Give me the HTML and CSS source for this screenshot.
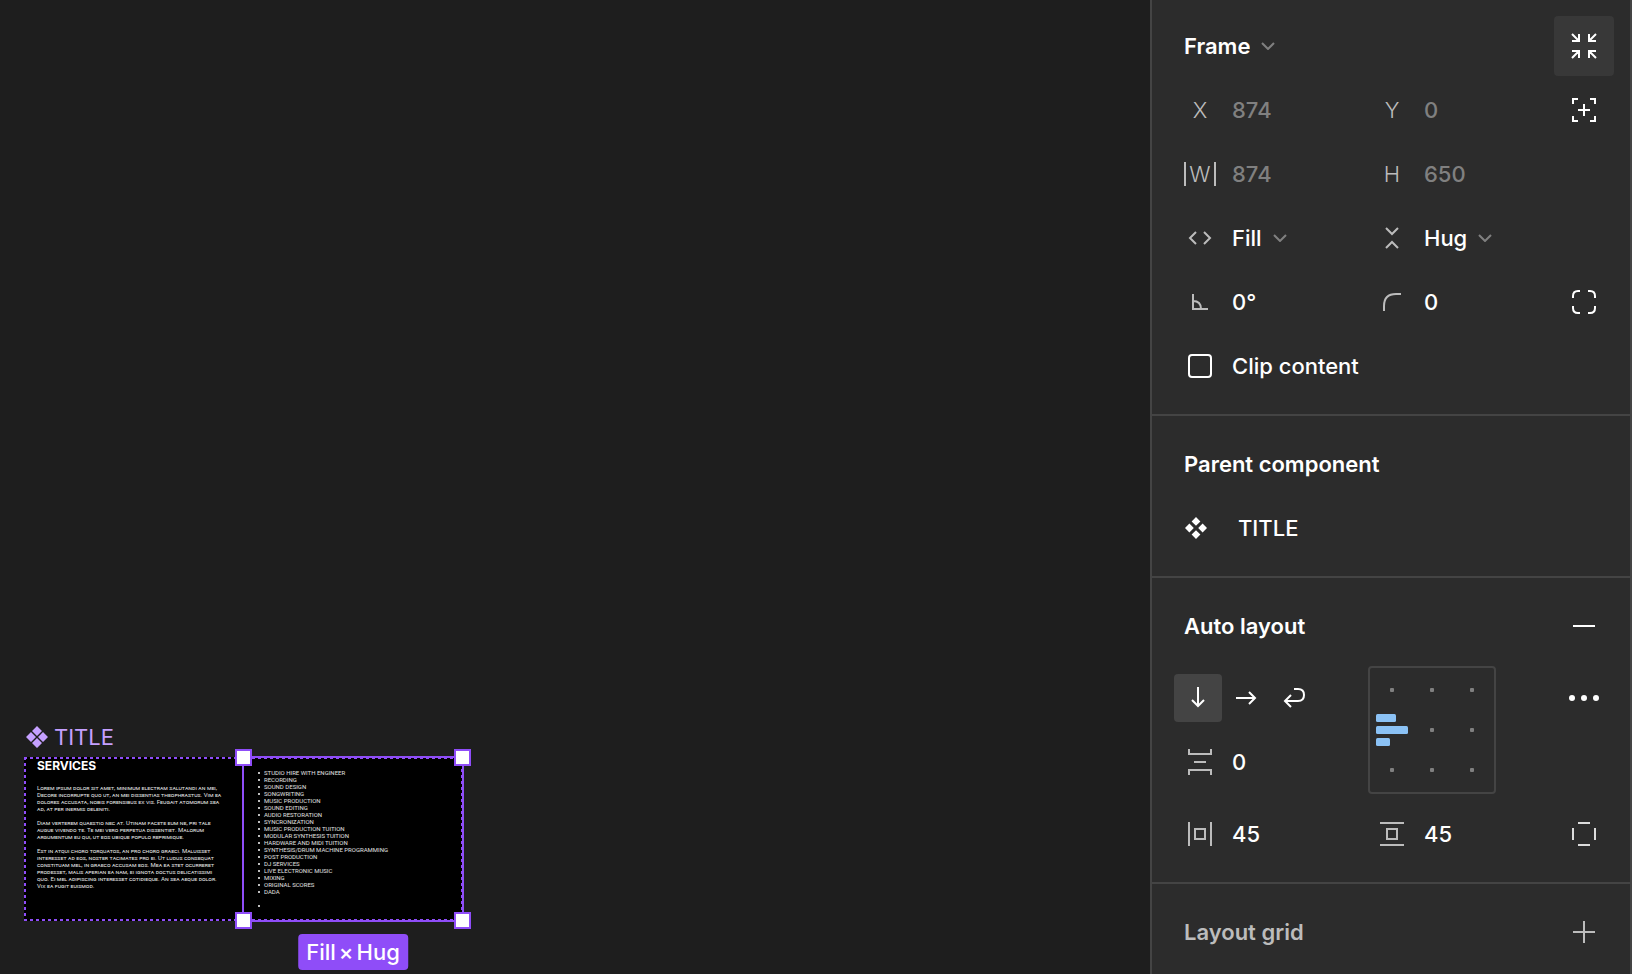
FILE: index.html
```html
<!DOCTYPE html>
<html lang="en">
<head>
<meta charset="utf-8">
<title>Design editor</title>
<link rel="stylesheet" href="styles.css">
</head>
<body>
<div class="editor">
  <main class="canvas" aria-label="Canvas">
    <div class="component">
      <div class="component-label">
        <svg class="component-mark" width="22" height="22" viewBox="0 0 22 22" fill="currentColor" aria-hidden="true"><path d="M11 0l5 5L11 10 6 5zM11 12l5 5L11 22l-5-5zM5 6L10 11l-5 5L0 11zM17 6L22 11l-5 5L12 11z"/></svg>
        <span>TITLE</span>
      </div>
      <div class="artboard">
        <article class="services">
          <h1>SERVICES</h1>
          <p>Lorem ipsum dolor sit amet, minimum electram salutandi an mei,<br>Decore incorrupte quo ut, an mei dissentias theophrastus. Vim ea<br>dolores accusata, nobis forensibus ex vis. Feugait atomorum sea<br>ad, at per inermis deleniti.</p>
          <p>Diam verterem quaestio nec at. Utinam facete eum ne, pri tale<br>augue vivendo te. Te mei vero perpetua dissentiet. Malorum<br>argumentum eu qui, ut eos ubique populo reprimique.</p>
          <p>Est in atqui choro torquatos, an pro choro graeci. Maluisset<br>interesset ad eos, noster tacimates pro ei. Ut ludus consequat<br>constituam mel, in graeco accusam eos. Mea ea stet ocurreret<br>prodesset, malis aperian ea nam, ei ignota doctus delicatissimi<br>quo. Ei mel adipiscing interesset cotidieque. An sea aeque dolor.<br>Vix ea fugit euismod.</p>
        </article>
        <div class="selected">
          <ul class="offer">
            <li>STUDIO HIRE WITH ENGINEER</li>
            <li>RECORDING</li>
            <li>SOUND DESIGN</li>
            <li>SONGWRITING</li>
            <li>MUSIC PRODUCTION</li>
            <li>SOUND EDITING</li>
            <li>AUDIO RESTORATION</li>
            <li>SYNCRONIZATION</li>
            <li>MUSIC PRODUCTION TUITION</li>
            <li>MODULAR SYNTHESIS TUITION</li>
            <li>HARDWARE AND MIDI TUITION</li>
            <li>SYNTHESIS/DRUM MACHINE PROGRAMMING</li>
            <li>POST PRODUCTION</li>
            <li>DJ SERVICES</li>
            <li>LIVE ELECTRONIC MUSIC</li>
            <li>MIXING</li>
            <li>ORIGINAL SCORES</li>
            <li>DADA</li>
            <li class="spacer"></li>
            <li></li>
          </ul>
          <span class="handle handle-nw"></span>
          <span class="handle handle-ne"></span>
          <span class="handle handle-sw"></span>
          <span class="handle handle-se"></span>
          <span class="size-badge"><span>Fill</span><span>×</span><span>Hug</span></span>
        </div>
      </div>
    </div>
  </main>

  <aside class="inspector" aria-label="Design">
    <section class="section section-frame">
      <div class="row row-heading">
        <span class="dropdown">
          <select class="select select-strong" aria-label="Layer type"><option>Frame</option></select>
          <svg class="chevron" width="14" height="8" viewBox="0 0 14 8" aria-hidden="true"><path d="M1 1l6 6 6-6"/></svg>
        </span>
        <button class="icon-button is-hovered" type="button" aria-label="Resize to fit">
          <svg class="icon" width="26" height="26" viewBox="0 0 26 26" aria-hidden="true"><path d="M1 1l7 7M1 8h7V1M25 1l-7 7M25 8h-7V1M1 25l7-7M1 18h7v7M25 25l-7-7M25 18h-7v7"/></svg>
        </button>
      </div>
      <div class="row">
        <label class="field"><span class="prefix">X</span><input class="value is-dim" type="text" value="874"></label>
        <label class="field"><span class="prefix">Y</span><input class="value is-dim" type="text" value="0"></label>
        <button class="icon-button" type="button" aria-label="Absolute position">
          <svg class="icon" width="24" height="24" viewBox="0 0 24 24" aria-hidden="true"><path d="M1 6V1h5M18 1h5v5M23 18v5h-5M6 23H1v-5M12 6v12M6 12h12"/></svg>
        </button>
      </div>
      <div class="row">
        <label class="field"><span class="prefix"><span class="bounded">W</span></span><input class="value is-dim" type="text" value="874"></label>
        <label class="field"><span class="prefix">H</span><input class="value is-dim" type="text" value="650"></label>
      </div>
      <div class="row">
        <label class="field">
          <span class="prefix"><svg class="icon" width="24" height="14" viewBox="0 0 24 14" aria-hidden="true"><path d="M8 1L2 7l6 6M16 1l6 6-6 6"/></svg></span>
          <span class="dropdown">
            <select class="select" aria-label="Horizontal resizing"><option>Fill</option></select>
            <svg class="chevron" width="14" height="8" viewBox="0 0 14 8" aria-hidden="true"><path d="M1 1l6 6 6-6"/></svg>
          </span>
        </label>
        <label class="field">
          <span class="prefix"><svg class="icon" width="14" height="22" viewBox="0 0 14 22" aria-hidden="true"><path d="M1 1l6 6 6-6M1 21l6-6 6 6"/></svg></span>
          <span class="dropdown">
            <select class="select" aria-label="Vertical resizing"><option>Hug</option></select>
            <svg class="chevron" width="14" height="8" viewBox="0 0 14 8" aria-hidden="true"><path d="M1 1l6 6 6-6"/></svg>
          </span>
        </label>
      </div>
      <div class="row">
        <label class="field">
          <span class="prefix"><svg class="icon" width="16" height="16" viewBox="0 0 16 16" aria-hidden="true"><path d="M1 0v15h15M1 7c5 0 8 3 8 8"/></svg></span>
          <input class="value" type="text" aria-label="Rotation" value="0°">
        </label>
        <label class="field">
          <span class="prefix"><svg class="icon" width="18" height="18" viewBox="0 0 18 18" aria-hidden="true"><path d="M1 18v-5C1 5 5 1 13 1h5"/></svg></span>
          <input class="value" type="text" aria-label="Corner radius" value="0">
        </label>
        <button class="icon-button" type="button" aria-label="Independent corners">
          <svg class="icon" width="24" height="24" viewBox="0 0 24 24" aria-hidden="true"><path d="M1 8V6q0-5 5-5h2M16 1h2q5 0 5 5v2M23 16v2q0 5-5 5h-2M8 23H6q-5 0-5-5v-2"/></svg>
        </button>
      </div>
      <div class="row">
        <label class="field field-wide"><span class="prefix"><input class="checkbox" type="checkbox"></span><span>Clip content</span></label>
      </div>
    </section>

    <section class="section">
      <div class="row row-heading"><h2>Parent component</h2></div>
      <div class="row">
        <a class="parent-link" href="#title">
          <svg width="22" height="22" viewBox="0 0 22 22" fill="currentColor" aria-hidden="true"><path d="M11 0l4.400 4.400L11 8.800 6.600 4.400zM11 13.200l4.400 4.400L11 22l-4.400-4.400zM4.400 6.600L8.800 11l-4.400 4.400L0 11zM17.600 6.600L22 11l-4.400 4.400-4.400-4.400z"/></svg>
          <span>TITLE</span>
        </a>
      </div>
    </section>

    <section class="section">
      <div class="row row-heading">
        <h2>Auto layout</h2>
        <button class="icon-button" type="button" aria-label="Remove auto layout">
          <svg class="icon" width="22" height="22" viewBox="0 0 22 22" aria-hidden="true"><path d="M0 11h22"/></svg>
        </button>
      </div>
      <div class="layout-controls">
        <div class="flow">
          <div class="directions">
            <button class="direction is-active" type="button" aria-label="Vertical layout">
              <svg class="icon" width="22" height="22" viewBox="0 0 22 22" aria-hidden="true"><path d="M11 0v19M5 13l6 6 6-6"/></svg>
            </button>
            <button class="direction" type="button" aria-label="Horizontal layout">
              <svg class="icon" width="22" height="22" viewBox="0 0 22 22" aria-hidden="true"><path d="M1 11h19M14 5l6 6-6 6"/></svg>
            </button>
            <button class="direction" type="button" aria-label="Wrap">
              <svg class="icon" width="22" height="22" viewBox="0 0 22 22" aria-hidden="true"><path d="M11 2h4q6 0 6 6 0 6-6 6H2M8 8l-6 6 6 6"/></svg>
            </button>
          </div>
          <label class="field">
            <span class="prefix"><svg class="icon" width="24" height="26" viewBox="0 0 24 26" aria-hidden="true"><path d="M1 0v5h22V0M6 13h12M1 26v-5h22v5"/></svg></span>
            <input class="value" type="text" aria-label="Gap between items" value="0">
          </label>
        </div>
        <div class="alignment" role="group" aria-label="Alignment">
          <button class="cell" type="button" aria-label="Top left"></button>
          <button class="cell" type="button" aria-label="Top center"></button>
          <button class="cell" type="button" aria-label="Top right"></button>
          <button class="cell is-chosen" type="button" aria-label="Left">
            <svg width="32" height="32" viewBox="0 0 32 32" fill="currentColor" aria-hidden="true"><rect width="20" height="8" rx="1.500"/><rect y="12" width="32" height="8" rx="1.500"/><rect y="24" width="14" height="8" rx="1.500"/></svg>
          </button>
          <button class="cell" type="button" aria-label="Center"></button>
          <button class="cell" type="button" aria-label="Right"></button>
          <button class="cell" type="button" aria-label="Bottom left"></button>
          <button class="cell" type="button" aria-label="Bottom center"></button>
          <button class="cell" type="button" aria-label="Bottom right"></button>
        </div>
        <button class="icon-button" type="button" aria-label="Advanced layout settings">
          <svg width="30" height="6" viewBox="0 0 30 6" fill="currentColor" aria-hidden="true"><circle cx="3" cy="3" r="3"/><circle cx="15" cy="3" r="3"/><circle cx="27" cy="3" r="3"/></svg>
        </button>
      </div>
      <div class="row">
        <label class="field">
          <span class="prefix"><svg class="icon" width="24" height="24" viewBox="0 0 24 24" aria-hidden="true"><path d="M1 0v24M23 0v24M7 7h10v10H7z"/></svg></span>
          <input class="value" type="text" aria-label="Horizontal padding" value="45">
        </label>
        <label class="field">
          <span class="prefix"><svg class="icon" width="24" height="24" viewBox="0 0 24 24" aria-hidden="true"><path d="M0 1h24M0 23h24M7 7h10v10H7z"/></svg></span>
          <input class="value" type="text" aria-label="Vertical padding" value="45">
        </label>
        <button class="icon-button is-soft" type="button" aria-label="Individual padding">
          <svg class="icon" width="24" height="24" viewBox="0 0 24 24" aria-hidden="true"><path d="M6 1h12M6 23h12M1 6v12M23 6v12"/></svg>
        </button>
      </div>
    </section>

    <section class="section">
      <div class="row row-heading is-muted">
        <h2>Layout grid</h2>
        <button class="icon-button is-muted" type="button" aria-label="Add layout grid">
          <svg class="icon" width="22" height="22" viewBox="0 0 22 22" aria-hidden="true"><path d="M0 11h22M11 0v22"/></svg>
        </button>
      </div>
    </section>
  </aside>
</div>
</body>
</html>
```
FILE: styles.css
```css
:root {
  --canvas: #1e1e1e;
  --panel: #2c2c2c;
  --line: #444444;
  --text: #ffffff;
  --muted: #bcbcbc;
  --dim: #808080;
  --purple: #8f4df8;
  --lilac: #c5a0ff;
  --blue: #8bc2f5;
}

* { box-sizing: border-box; }

body {
  margin: 0;
  background: var(--canvas);
  color: var(--text);
  font: 450 22px/32px Inter, "Liberation Sans", sans-serif;
}

button, input, select {
  margin: 0;
  padding: 0;
  border: 0;
  background: none;
  color: inherit;
  font: inherit;
}

h1, h2, p, ul { margin: 0; padding: 0; }

svg { display: block; }

.editor {
  display: grid;
  grid-template-columns: 1fr 482px;
  height: 100vh;
  overflow: hidden;
}

/* Canvas */
.canvas { position: relative; }

.component {
  position: absolute;
  left: 24px;
  top: 717px;
}

.component-label {
  display: flex;
  align-items: center;
  gap: 6px;
  height: 40px;
  padding-left: 2px;
  color: var(--lilac);
  font-weight: 400;
}

/* Dashed outline: 3px dashes every 6px along each edge */
.artboard {
  display: grid;
  grid-template-columns: 216px 219px;
  width: 439px;
  height: 164px;
  padding: 2px;
  background:
    repeating-linear-gradient(90deg, var(--purple) 0 3px, #000 3px 6px) top / 100% 2px no-repeat,
    repeating-linear-gradient(90deg, var(--purple) 0 3px, #000 3px 6px) bottom / 100% 2px no-repeat,
    repeating-linear-gradient(var(--purple) 0 3px, #000 3px 6px) left / 2px 100% no-repeat,
    repeating-linear-gradient(var(--purple) 0 3px, #000 3px 6px) right / 2px 100% no-repeat,
    #000;
}

.services {
  padding: 3px 11px;
  color: #e0e0e0;
  font-family: Roboto, sans-serif;
  font-weight: 400;
  font-size: 6px;
  line-height: 7px;
  white-space: nowrap;
  font-variant: small-caps;
}

.services h1 {
  margin-bottom: 14px;
  color: #fff;
  font-family: Inter, sans-serif;
  font-size: 12px;
  line-height: 8px;
  font-weight: 700;
}

.services p { margin-bottom: 7px; }

.selected {
  position: relative;
  margin: -3px -3px -3px 0;
  border: 2px solid var(--purple);
}

.offer {
  padding: 11px 0 0 20px;
  color: #e0e0e0;
  list-style: none;
  font-family: Roboto, sans-serif;
  font-weight: 400;
  font-size: 6px;
  line-height: 7px;
  white-space: nowrap;
}

.offer li { display: flex; align-items: center; height: 7px; }

.offer li::before {
  content: "";
  width: 2px;
  height: 2px;
  margin: 0 4px 0 -6px;
  border-radius: 1px;
  background: #fff;
}

.offer .spacer::before { visibility: hidden; }

.handle {
  position: absolute;
  width: 17px;
  height: 17px;
  background: #fff;
  border: 2px solid var(--purple);
}

.handle-nw { left: -9px; top: -9px; }
.handle-ne { right: -9px; top: -9px; }
.handle-sw { left: -9px; bottom: -9px; }
.handle-se { right: -9px; bottom: -9px; }

.size-badge {
  position: absolute;
  top: 176px;
  left: 50%;
  translate: -50%;
  display: flex;
  gap: 3px;
  padding: 2px 8px;
  border-radius: 4px;
  background: var(--purple);
  font-weight: 500;
  white-space: nowrap;
}

/* Inspector */
.inspector {
  overflow: hidden;
  background: var(--panel);
  border: solid var(--line);
  border-width: 0 2px;
}

.section {
  padding: 16px 14px 16px 16px;
  border-bottom: 2px solid var(--line);
}

.section-frame { padding-top: 14px; }

.section:last-child { border-bottom: 0; }

.row, .layout-controls {
  display: grid;
  grid-template-columns: 3fr 3fr 1fr;
  align-items: center;
  min-height: 64px;
}

.row-heading {
  display: flex;
  justify-content: space-between;
  padding-left: 16px;
}

h2, .select-strong { font-size: 22px; font-weight: 625; }

.is-muted { color: var(--muted); }

.field {
  display: flex;
  align-items: center;
  height: 64px;
  min-width: 0;
}

.field-wide { grid-column: span 2; }

.prefix {
  display: grid;
  place-items: center;
  flex: none;
  width: 64px;
  color: var(--muted);
  font-weight: 350;
}

.bounded {
  width: 32px;
  border: solid currentColor;
  border-width: 0 2px;
  line-height: 24px;
  text-align: center;
}

.value { width: 100%; min-width: 0; }

.is-dim { color: var(--dim); }

.dropdown { display: flex; align-items: center; gap: 11px; }

.select { appearance: none; field-sizing: content; }

.chevron, .icon {
  fill: none;
  stroke: currentColor;
  stroke-width: 2;
}

.chevron { color: var(--dim); }

.checkbox {
  appearance: none;
  width: 24px;
  height: 24px;
  border: 2px solid #fff;
  border-radius: 4px;
}

.icon-button {
  display: grid;
  place-items: center;
  width: 64px;
  height: 64px;
}

.is-hovered {
  width: 60px;
  height: 60px;
  margin-right: 2px;
  border-radius: 4px;
  background: #383838;
}

.is-soft { color: #dcdcdc; }

.parent-link {
  display: flex;
  align-items: center;
  gap: 31px;
  padding-left: 17px;
  color: inherit;
  text-decoration: none;
}

.layout-controls {
  align-items: start;
  margin-bottom: 8px;
  padding-top: 8px;
}

.directions {
  display: flex;
  align-items: center;
  height: 64px;
  padding-left: 6px;
}

.direction {
  display: grid;
  place-items: center;
  width: 48px;
  height: 48px;
  border-radius: 4px;
}

.direction.is-active { background: var(--line); }

.alignment {
  display: grid;
  grid-template-columns: repeat(3, 40px);
  grid-auto-rows: 40px;
  place-content: center;
  width: 128px;
  height: 128px;
  margin-left: 8px;
  border: 2px solid var(--line);
  border-radius: 4px;
}

.cell { display: grid; place-items: center; }

.cell::before {
  content: "";
  width: 4px;
  height: 4px;
  border-radius: 1px;
  background: var(--dim);
}

.cell.is-chosen { color: var(--blue); }
.cell.is-chosen::before { display: none; }
```
